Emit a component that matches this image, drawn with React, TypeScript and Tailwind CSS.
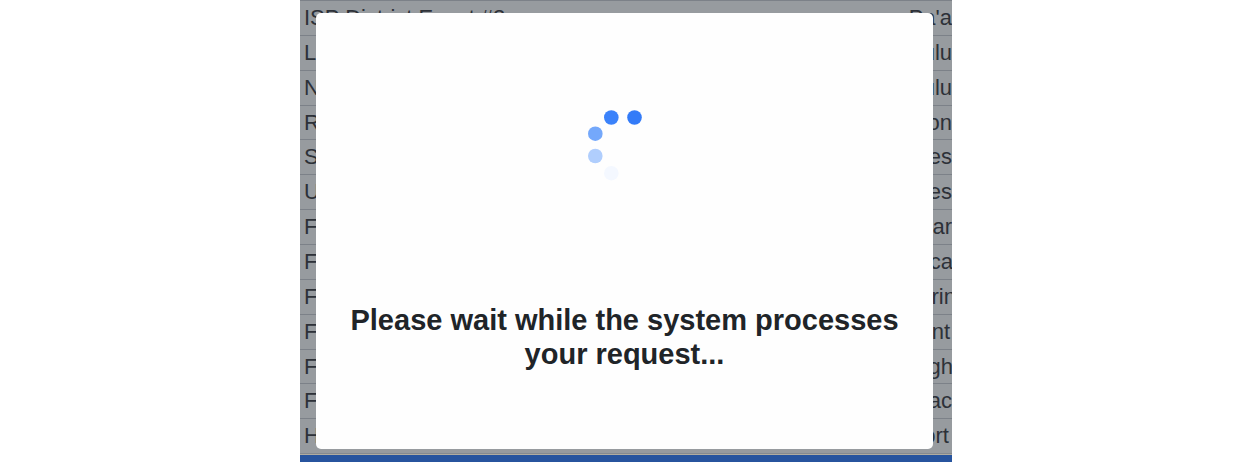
const rows: [string, string][] = [
  ["ISP District Event #2", "Pa'a"],
  ["L", "ulu"],
  ["N", "ulu"],
  ["R", "on"],
  ["S", "es"],
  ["U", "es"],
  ["F", "ar"],
  ["F", "sca"],
  ["F", "orin"],
  ["F", "nt"],
  ["F", "gh"],
  ["F", "ac"],
  ["H", "ort"],
];

const ends = [0, 0, 0, 0, 0, 0, 0, -1, -4, 2, -1, 0, 3];

const dots: [number, number, string][] = [
  [41.3, 7.5, "#3b82fa"],
  [64.5, 7.5, "#337bf8"],
  [25.3, 23.7, "#74a8fb"],
  [25.3, 46, "#b0cefd"],
  [41.3, 63.2, "#f4f8ff"],
];

export default function App() {
  return (
    <div className="h-[462px] w-[1260px] overflow-hidden bg-white font-['Liberation_Sans',Arial,sans-serif]">
      <div className="relative ml-[300px] flex h-full w-[652px] flex-col overflow-hidden bg-[#979b9f]">
        {rows.map(([name, place], i) => (
          <div
            key={i}
            className="flex h-[34.87px] shrink-0 items-center justify-between whitespace-nowrap border-t border-[#7c8188] pl-[4px] text-[22px] leading-[34px] text-[#2d3138]"
          >
            <span>{name}</span>
            <span style={{ marginRight: ends[i] }}>{place}</span>
          </div>
        ))}
        <div className="h-px shrink-0 bg-[#858a90]" />
        <div className="h-px shrink-0 bg-[#b0aca0]" />
        <div className="flex-1 bg-[#27549e]" />
        <div
          role="dialog"
          className="absolute left-[16px] top-[13px] flex h-[436px] w-[617px] flex-col items-center rounded-[5px] bg-[#fefefe]"
        >
          <svg className="mt-[97px] h-[80px] w-[110px] shrink-0" viewBox="0 0 110 80">
            {dots.map(([x, y, color]) => (
              <circle key={`${x}-${y}`} cx={x} cy={y} r={7.3} fill={color} />
            ))}
          </svg>
          <h2 className="mt-[113px] whitespace-nowrap text-center text-[29px] font-bold leading-[34px] text-[#202428]">
            Please wait while the system processes
            <br />
            your request...
          </h2>
        </div>
      </div>
    </div>
  );
}
